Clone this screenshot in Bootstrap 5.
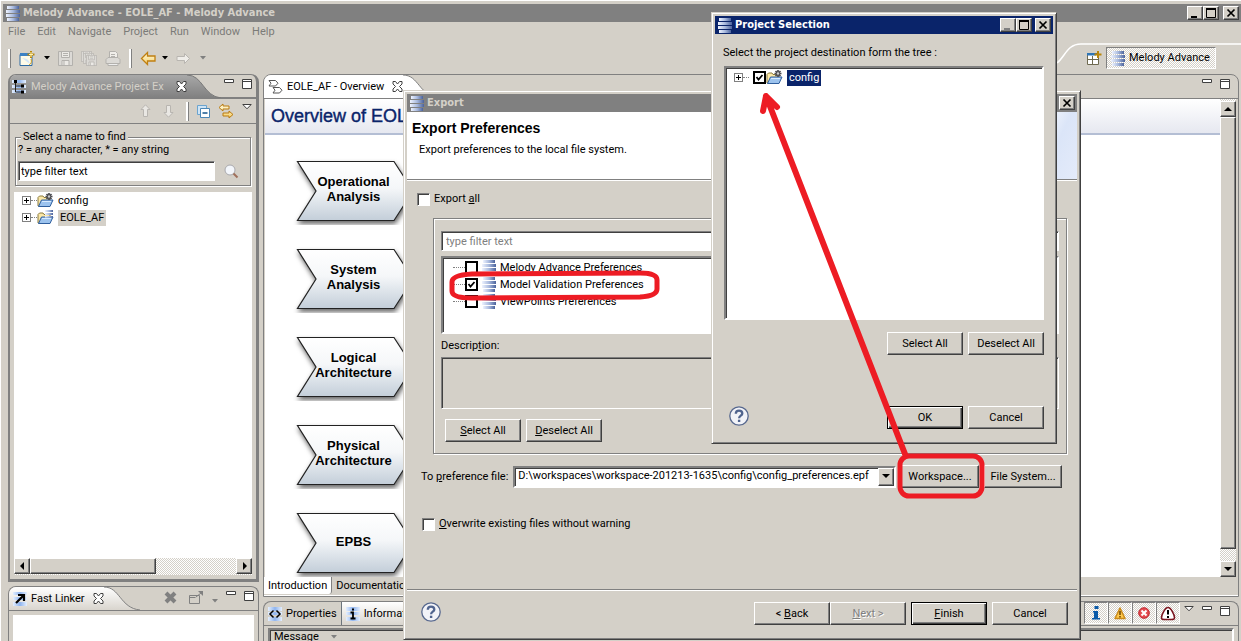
<!DOCTYPE html>
<html lang="en">
<head>
<meta charset="utf-8">
<meta name="viewport" content="width=device-width, initial-scale=1">
<title>Melody Advance - EOLE_AF - Melody Advance</title>
<link href="https://cdn.jsdelivr.net/npm/bootstrap@5.3.0/dist/css/bootstrap.min.css" rel="stylesheet">
<style>
:root{--face:#d4d0c8;--shade:#808080;--dark:#404040;--navy:#0a246a;--mark:#ed1c24}
body{background:var(--face);color:#000;font-family:Roboto,"Noto Sans",sans-serif;font-size:11px;line-height:14px;height:100vh;overflow:hidden;position:relative;white-space:nowrap}
svg{display:block;flex:none}
u{text-underline-offset:1px}
a{color:inherit;text-decoration:none}
.app{border-left:1px solid #fff;border-top:1px solid #fff;padding:3px 0 0 2px;height:100vh}
.title-strip{background:var(--shade);color:var(--face);height:18px;padding:0 2px 0 3px;font-weight:700;gap:3px}
.title-strip.hot{background:var(--navy);color:#fff}
.caption{font-family:"DejaVu Sans Condensed","DejaVu Sans",sans-serif;font-size:11px;line-height:18px}
.winbtn{width:16px;height:14px;padding:0;background:var(--face);border:1px solid;border-color:#fff var(--dark) var(--dark) #fff;box-shadow:inset -1px -1px var(--shade);display:flex;align-items:center;justify-content:center}
.menus{height:20px;padding-left:5px;gap:12px;color:#7b7b78}
.tools{height:32px;padding-left:5px}
.grip{width:3px;height:19px;background:#fff;border-right:1px solid var(--shade)}
.iconbtn{padding:0;border:0;background:none;display:block}
.persp{border:1px solid;border-color:var(--shade) #fff #fff var(--shade);height:22px;width:110px;padding:0 4px;gap:4px;margin:0 25px 0 4px}
.dither{background:repeating-conic-gradient(#fff 0 25%,var(--face) 0 50%) 0 0/2px 2px}
.desk{padding:0 2px 0 5px;gap:4px}
.side{width:251px}
.view{border:1px solid var(--shade);border-bottom:0;border-radius:8px 8px 0 0;overflow:hidden}
.explorer{border-width:1px 3px 3px 2px;border-bottom:3px solid var(--shade)}
.tabs{height:24px;border-bottom:1px solid var(--shade)}
.explorer .tabs{border-bottom:2px solid var(--shade)}
.tab-on{height:23px;gap:4px;padding-left:4px}
.tab-grey{background:linear-gradient(#a8a8a8,#808080);color:var(--face);padding-left:1px}
.tab-light{background:linear-gradient(#fff,#d9d5ce)}
.tab-white{background:#fff}
.viewtools{height:25px;border-bottom:1px solid var(--shade)}
.finder{border:1px solid var(--shade);box-shadow:inset 1px 1px #fff,1px 1px #fff;margin:6px 5px;height:56px;padding:0 2px}
.finder legend{font-size:11px;line-height:14px;width:auto;float:none;margin:0 0 0 3px;padding:0 2px;background:var(--face)}
.finder label{margin-top:-1px}
.field{background:#fff;border:1px solid;border-color:var(--shade) #fff #fff var(--shade);box-shadow:inset 1px 1px var(--dark);border-radius:0;font-size:11px;line-height:14px;padding:0 4px;height:20px;color:#000;min-height:0}
.finder .field{padding:0 2px;width:197px}
.field::placeholder{color:#808080}
.tree{background:#fff;list-style:none;margin:0;padding:0}
.tree li{height:17px;display:flex;align-items:center}
.well{background:#fff;border:2px solid;border-color:var(--shade) #fff #fff var(--shade);box-shadow:inset 1px 1px var(--dark)}
.picked{background:var(--face);padding:1px 2px}
.picked.hot{background:var(--navy);color:#fff}
.twist{width:9px;height:9px;border:1px solid var(--shade);background:linear-gradient(#000,#000) center/5px 1px no-repeat,linear-gradient(#000,#000) center/1px 5px no-repeat,#fff}
.dots{border-top:1px dotted var(--shade);width:6px}
.sbar{height:17px}
.sbtn,.thumb{background:var(--face);border:1px solid;border-color:#fff var(--dark) var(--dark) #fff;box-shadow:inset -1px -1px var(--shade);width:16px;height:16px;padding:0;display:flex;align-items:center;justify-content:center;flex:none}
.page{padding:0 2px 0 1px}
.page .sbtn:first-child{margin-top:2px}
.banner{height:36px;background:linear-gradient(#fff,#e6e8f0);border-bottom:2px solid #b4bed4;padding:1px 0 0 6px;font:18px "Liberation Sans",Arial,sans-serif;color:var(--navy);-webkit-text-stroke:.4px var(--navy)}
.steps{padding:22px 0 0 28px;gap:20px;overflow:hidden}
.step{width:124px;height:68px;position:relative;font:bold 13px/15px "Liberation Sans",Arial,sans-serif;color:#000;padding:0 3px 4px 0;flex:none;text-align:center}
.step svg{position:absolute;inset:0}
.step span{position:relative}
.pagetabs{height:19px;background:var(--face);border-bottom:1px solid #fff}
.pagetab{height:17px;padding:2px 4px 0;border-right:1px solid var(--shade);border-radius:0 0 3px 0}
.toggle{width:24px;height:22px;border:1px solid;border-color:var(--shade) #fff #fff var(--shade);padding:0;display:flex;align-items:center;justify-content:center}
.window{position:absolute;background:var(--face);border:1px solid;border-color:var(--face) var(--dark) var(--dark) var(--face);box-shadow:inset 1px 1px #fff,inset -1px -1px var(--shade);padding:3px}
.export{left:403px;top:90px;width:678px;height:550px}
.chooser{left:711px;top:12px;width:346px;height:432px}
.intro{background:linear-gradient(115deg,transparent 40%,#dbe5f8 70%,#e4ebfa) right/90px 100% no-repeat,#fff;height:68px;border-bottom:1px solid var(--shade);padding:8px 5px;box-shadow:0 1px #fff}
.intro h1{font:bold 14px/16px "Liberation Sans",Arial,sans-serif;margin:0 0 7px}
.intro div{padding-left:7px}
.panel{border:1px solid var(--shade);box-shadow:inset 1px 1px #fff,1px 1px #fff;margin:12px 10px 0 26px;padding:12px 7px 11px;height:236px}
.prefs{height:78px;margin-top:5px;padding:1px 0 0 10px}
.btn.push{width:76px;height:23px;padding:0;font-size:11px;line-height:14px;border-radius:0;color:#000;background:var(--face);border:1px solid;border-color:#fff var(--dark) var(--dark) #fff;box-shadow:inset -1px -1px var(--shade);flex:none}
.btn.push.wide{width:78px}
.btn.push.main{border-color:#000;box-shadow:inset 1px 1px #fff,inset -1px -1px var(--dark),inset -2px -2px var(--shade)}
.btn.push:disabled{color:#808080;text-shadow:1px 1px #fff;opacity:1}
.pair{gap:5px}
.tick{appearance:none;width:13px;height:13px;margin:0;background:#fff;border:1px solid;border-color:var(--shade) #fff #fff var(--shade);box-shadow:inset 1px 1px var(--dark);flex:none}
.tick.bold{border:2px solid #000;box-shadow:none}
.tick:checked{background:#fff url("data:image/svg+xml,%3Csvg xmlns='http://www.w3.org/2000/svg' viewBox='0 0 9 9'%3E%3Cpath d='M1.5 4 3.5 6.5 7.5 2' fill='none' stroke='%23000' stroke-width='1.8'/%3E%3C/svg%3E") center/9px 9px no-repeat}
.target{width:100%;height:22px;border:2px solid;border-color:var(--shade) #fff #fff var(--shade);box-shadow:inset 1px 1px var(--dark);border-radius:0;font-size:11px;line-height:14px;padding:0 16px 1px 3px;color:#000;appearance:none;background:#fff;display:block}
.drop{position:absolute;right:2px;top:2px;width:16px;height:18px;pointer-events:none}
.foot{border-top:1px solid var(--shade);box-shadow:inset 0 1px #fff;padding:12px 9px 0 14px}
.marks{position:absolute;left:0;top:0;pointer-events:none}
.desc{background:var(--face);height:52px;resize:none;display:block;width:100%}
</style>
</head>
<body>
<svg width="0" height="0" class="position-absolute" aria-hidden="true">
<defs>
<linearGradient id="bar"><stop offset="0" stop-color="#eef3ff"/><stop offset=".5" stop-color="#a9bade"/><stop offset="1" stop-color="#4b639c"/></linearGradient>
<linearGradient id="soft"><stop offset="0" stop-color="#e4efff"/><stop offset=".5" stop-color="#8fb4ee"/><stop offset="1" stop-color="#e4efff"/></linearGradient>
<linearGradient id="steel" x2="0" y2="1"><stop offset="0" stop-color="#fff"/><stop offset=".45" stop-color="#f5f7f9"/><stop offset="1" stop-color="#c3ced9"/></linearGradient>
<linearGradient id="gold" x2="0" y2="1"><stop offset="0" stop-color="#fffbe0"/><stop offset="1" stop-color="#f5cf6a"/></linearGradient>
<linearGradient id="greytab" x2="0" y2="1"><stop offset="0" stop-color="#a8a8a8"/><stop offset="1" stop-color="#808080"/></linearGradient>
<linearGradient id="lighttab" x2="0" y2="1"><stop offset="0" stop-color="#fff"/><stop offset="1" stop-color="#d9d5ce"/></linearGradient>
<filter id="drop" x="-10%" y="-10%" width="125%" height="135%"><feDropShadow dx="1" dy="3" stdDeviation="2.5" flood-opacity=".6"/></filter>
<symbol id="db" viewBox="0 0 14 15"><g fill="url(#bar)"><rect x="1" width="12" height="3"/><rect y="4" width="14" height="3"/><rect y="8" width="14" height="3"/><rect x="1" y="12" width="12" height="3"/></g></symbol>
<symbol id="close" viewBox="0 0 11 11"><path d="M1 .5h2.500l2 2.500 2-2.500H10v2.500L7.500 5.500 10 8v2.500H7.500l-2-2.500-2 2.500H1V8l2.500-2.500L1 3z" fill="#fff" stroke="#404040"/></symbol>
<symbol id="min" viewBox="0 0 10 4"><path d="M.5.5h9v3h-9z" fill="#fff" stroke="#404040"/></symbol>
<symbol id="max" viewBox="0 0 10 10"><path d="M.5.500h9v9h-9zM.5 2.500h9" fill="#fff" stroke="#404040"/></symbol>
<symbol id="menu" viewBox="0 0 10 6"><path d="M.8.500h8.400L5 4.800z" fill="#fff" stroke="#404040"/></symbol>
<symbol id="caret" viewBox="0 0 7 4"><path d="M1 0h6L4 3.500z" fill="currentColor"/></symbol>
<symbol id="wmin" viewBox="0 0 10 10"><path d="M1 8h6v2H1z" fill="currentColor"/></symbol>
<symbol id="wmax" viewBox="0 0 10 10"><path d="M.5 1.500h9v8h-9z" fill="none" stroke="#000"/><path d="M0 0h10v2H0z"/></symbol>
<symbol id="wx" viewBox="0 0 10 10"><path d="M1.500 1.500l7 7M8.500 1.500l-7 7" stroke="#000" stroke-width="1.700"/></symbol>
<symbol id="folder" viewBox="0 0 17 15"><path d="M1 13V4.500L2.500 3H6l1 1.500h6V13z" fill="#fbe8a8" stroke="#8c7a3c"/><path d="M1.500 13.500 4.500 7h11.500l-3 6.500z" fill="#9cc3ee" stroke="#2f5f9e"/><path d="M5 8.500h9" stroke="#d8ebff"/></symbol>
<symbol id="gear" viewBox="0 0 17 15"><use href="#folder" width="17" height="15"/><path d="M8.500 3.500h7M12 0v7M9.500 1l5 5M14.500 1l-5 5" stroke="#4b4b50" stroke-width="1.700"/><circle cx="12" cy="3.500" r="1.200" fill="#ccc"/></symbol>
<symbol id="model" viewBox="0 0 17 15"><use href="#folder" width="17" height="15"/><path d="M8 0h8v2H8zM8 3h8v2H8zM8 6h8v1.500H8z" fill="url(#bar)"/></symbol>
<symbol id="help" viewBox="0 0 20 20"><circle cx="10" cy="10" r="9.200" fill="#f2f3f8" stroke="#57688e" stroke-width="1.300"/><path d="M6.800 7.800C6.800 5.500 8.200 4.700 10 4.700s3.300.9 3.300 2.700c0 2.300-3.200 2.200-3.200 4.800" fill="none" stroke="#50648e" stroke-width="2.300"/><path d="M8.900 13.700h2.400V16H8.900z" fill="#50648e"/></symbol>
<symbol id="chev" viewBox="0 0 124 68"><path d="M4.500 4.500h96.500l19 29.500-19 29.500H4.500L23 34z" fill="url(#steel)" stroke="#222" stroke-width="1.200" filter="url(#drop)"/></symbol>
<symbol id="overview" viewBox="0 0 15 14"><path d="M1 .5h6.500L10 3.200 7.500 6H1l2-2.800zM5 7.500h6.500l2.500 2.700L11.500 13H5l2-2.800z" fill="#fff" stroke="#555"/></symbol>
<symbol id="diskette" viewBox="0 0 15 15"><path d="M.5.500h14v14H.5z" fill="#dcdad6" stroke="#b3b1ad"/><path d="M3.500.500h8v6h-8zM4 9.500h7v5H4z" fill="#eceae6" stroke="#b3b1ad"/><path d="M5 2.500h5M5 4.500h5M6 10v4" stroke="#b3b1ad"/></symbol>
</defs>
</svg>

<main class="app d-flex flex-column">
  <header class="title-strip d-flex align-items-center">
    <svg width="14" height="15"><use href="#db"/></svg>
    <span class="caption me-auto">Melody Advance - EOLE_AF - Melody Advance</span>
    <div class="d-flex"><button class="winbtn" aria-label="Minimize"><svg width="10" height="10"><use href="#wmin"/></svg></button><button class="winbtn" aria-label="Maximize"><svg width="10" height="10"><use href="#wmax"/></svg></button><button class="winbtn ms-1" aria-label="Close"><svg width="10" height="10"><use href="#wx"/></svg></button></div>
  </header>
  <nav class="menus d-flex align-items-center"><a href="#">File</a><a href="#">Edit</a><a href="#">Navigate</a><a href="#">Project</a><a href="#">Run</a><a href="#">Window</a><a href="#">Help</a></nav>

  <div class="tools d-flex align-items-center">
    <span class="grip me-1"></span>
    <button class="iconbtn ms-1" aria-label="New"><svg width="16" height="15"><path d="M1 3.500h12v11H1z" fill="#fffbe8" stroke="#2d6aa5"/><path d="M1 2h11v3H1z" fill="#3c81c4"/><path d="M3 7q7 0 8 6" fill="#d3e6f8"/><path d="M12 0v7M8.500 3.500h7" stroke="#b8860b" stroke-width="2"/><path d="M12 1v5M10 3.500h4" stroke="#fff3b0"/><path d="M12 8c1 3 0 5-2 6" stroke="#d5a021" fill="none"/></svg></button>
    <svg class="ms-2 me-1" width="7" height="4"><use href="#caret"/></svg>
    <button class="iconbtn ms-1" aria-label="Save"><svg width="15" height="15"><use href="#diskette"/></svg></button>
    <button class="iconbtn ms-2" aria-label="Save all"><svg width="16" height="15"><use href="#diskette" width="11" height="11"/><use href="#diskette" x="2" y="2" width="11" height="11"/><use href="#diskette" x="5" y="4" width="11" height="11"/></svg></button>
    <button class="iconbtn ms-2" aria-label="Print"><svg width="16" height="15"><path d="M4.500.500h6l2 2v5h-8z" fill="#f0eeea" stroke="#b3b1ad"/><path d="M1 8.500l2-2h10l2 2v4H1z" fill="#dcdad6" stroke="#b3b1ad"/><path d="M3 12.500h10v2H3zM6 3.500h4M6 5.500h4" stroke="#b3b1ad" fill="#eee"/></svg></button>
    <span class="grip ms-2 me-2"></span>
    <button class="iconbtn" aria-label="Back"><svg width="17" height="15"><path d="M1.500 7.500l6-6v3.500h7.500v5H7.500v3.500z" fill="url(#gold)" stroke="#c07f10" stroke-width="1.300"/></svg></button>
    <svg class="ms-1 me-2" width="7" height="4"><use href="#caret"/></svg>
    <button class="iconbtn" aria-label="Forward" disabled><svg width="15" height="13"><path d="M13.500 6.500l-5-5v3H1v4h7.500v3z" fill="#efede9" stroke="#b8b5b0"/></svg></button>
    <svg class="ms-2" width="7" height="4" color="#808080"><use href="#caret"/></svg>
    <div class="d-flex align-items-center ms-auto position-relative">
      <svg width="184" height="22" class="position-absolute end-0" style="top:-4px"><path d="M0 20C8 14 10 1 24 1H184" fill="none" stroke="#fff" stroke-width="1.500"/></svg>
      <button class="iconbtn position-relative" aria-label="Open perspective"><svg width="15" height="15"><path d="M.5 2.500h11v11H.5z" fill="#fff" stroke="#6f6a50"/><path d="M0 2h9v2.500H0z" fill="#2e75b6"/><path d="M0 8.500h11M5.500 5v9" stroke="#6f6a50"/><path d="M11 0v7M7.500 3.500h7" stroke="#b8860b" stroke-width="2"/></svg></button>
      <button class="persp dither d-flex align-items-center position-relative"><svg width="14" height="15"><use href="#db"/></svg>Melody Advance</button>
    </div>
  </div>

  <div class="desk d-flex flex-fill overflow-hidden">
    <div class="side d-flex flex-column flex-shrink-0">
      <section class="view explorer d-flex flex-column flex-fill mb-1">
        <div class="tabs d-flex">
          <div class="tab-on tab-grey d-flex align-items-center">
            <svg width="16" height="15"><path d="M1 1h14v3H1zM1 6h14v3H1zM1 11h14v3H1z" fill="url(#soft)"/><path d="M4.500 2v11h7M4.500 7h7" stroke="#222" fill="none"/><path d="M3 1h3v3H3zM10 5.500h3v3h-3zM10 11.500h3v3h-3z"/></svg>
            <span>Melody Advance Project Ex</span>
            <svg class="ms-2" width="11" height="11"><use href="#close"/></svg>
          </div>
          <svg width="34" height="23"><path d="M0 0C16 0 16 21 34 23H0z" fill="url(#greytab)"/><path d="M0 0C16 0 16 21 34 23" fill="none" stroke="#777"/></svg>
          <div class="d-flex align-items-start ms-auto gap-2 pt-1 pe-1"><svg width="10" height="4"><use href="#min"/></svg><svg width="10" height="10"><use href="#max"/></svg></div>
        </div>
        <div class="viewtools d-flex align-items-center justify-content-end gap-2 pe-1">
          <svg class="me-1" width="11" height="14"><path d="M5.500.800l4.500 4.700H7.500v7h-4v-7H1z" fill="#e9e7e3" stroke="#b8b5b0"/></svg>
          <svg class="me-1" width="11" height="14"><path d="M5.500 13.200L1 8.500h2.500v-7h4v7H10z" fill="#e9e7e3" stroke="#b8b5b0"/></svg>
          <span class="grip"></span>
          <svg width="13" height="13"><path d="M.5.500h9v9h-9z" fill="#cfe4f5" stroke="#6ba4cf"/><path d="M3.500 3.500h9v9h-9z" fill="#fff" stroke="#4b86b5"/><path d="M5.500 8h5" stroke="#15558b" stroke-width="1.500"/></svg>
          <svg width="16" height="16"><path d="M1 4.500L5 1v2h6v3H5v2zM15 11.500L11 15v-2H5v-3h6V8z" fill="url(#gold)" stroke="#b97b10"/></svg>
          <svg class="mb-2" width="10" height="6"><use href="#menu"/></svg>
        </div>
        <fieldset class="finder">
          <legend>Select a name to find</legend>
          <label for="find" class="d-block">? = any character, * = any string</label>
          <div class="d-flex align-items-center mt-1"><input id="find" class="field" value="type filter text"><svg class="ms-2" width="16" height="16"><circle cx="7" cy="7" r="5" fill="#f3f6fb" stroke="#a9a9ad"/><path d="M10.500 10.500l4 4" stroke="#a0705c" stroke-width="2"/></svg></div>
        </fieldset>
        <ul class="tree flex-fill mx-1 ps-2">
          <li><span class="twist"></span><span class="dots"></span><svg width="17" height="15"><use href="#gear"/></svg><span class="ps-1">config</span></li>
          <li><span class="twist"></span><span class="dots"></span><svg width="17" height="15" class="me-1"><use href="#model"/></svg><span class="picked">EOLE_AF</span></li>
        </ul>
        <div class="sbar dither d-flex mx-1 mb-1"><button class="sbtn" aria-label="Scroll left"><svg width="5" height="8"><path d="M4 0v8L0 4z"/></svg></button><span class="thumb" style="width:53%"></span><button class="sbtn ms-auto" aria-label="Scroll right"><svg width="5" height="8"><path d="M1 0v8l4-4z"/></svg></button></div>
      </section>
      <section class="view d-flex flex-column flex-shrink-0" style="height:55px">
        <div class="tabs d-flex">
          <div class="tab-on tab-light d-flex align-items-center">
            <svg width="14" height="14"><path d="M0 0h14v3H0zM0 5h14v3H0zM0 10h14v4H0z" fill="url(#soft)"/><path d="M3 11l7-7M5 3h6v6" stroke="#000" stroke-width="2.200" fill="none"/></svg>
            <span>Fast Linker</span><svg class="ms-1" width="11" height="11"><use href="#close"/></svg>
          </div>
          <svg width="36" height="23"><path d="M0 0C16 0 16 21 36 23H0z" fill="url(#lighttab)"/><path d="M0 0C16 0 16 21 36 23" fill="none" stroke="#808080"/></svg>
          <div class="d-flex align-items-start ms-auto gap-2 pt-1 pe-1">
            <svg class="me-1" width="13" height="13"><path d="M2 2l9 9M11 2l-9 9" stroke="#808080" stroke-width="4"/></svg>
            <svg width="14" height="13"><path d="M.500 4.500h10v8H.500zM.500 6.500h6M7 6l5-4" fill="none" stroke="#808080"/><path d="M9 0h5v5z" fill="#808080"/></svg>
            <svg class="mt-2" width="7" height="4" color="#808080"><use href="#caret"/></svg>
            <svg width="10" height="4"><use href="#min"/></svg><svg width="10" height="10"><use href="#max"/></svg>
          </div>
        </div>
        <div class="flex-fill bg-white mx-1 mt-1"></div>
      </section>
    </div>

    <div class="d-flex flex-column flex-fill">
      <section class="view d-flex flex-column flex-fill overflow-hidden mb-1" style="border-bottom:1px solid #808080">
        <div class="tabs d-flex">
          <div class="tab-on tab-white d-flex align-items-center"><svg width="15" height="14"><use href="#overview"/></svg><span>EOLE_AF - Overview</span><svg class="ms-1" width="11" height="11"><use href="#close"/></svg></div>
          <svg width="36" height="23"><path d="M0 0C16 0 16 21 36 23H0z" fill="#fff"/><path d="M0 0C16 0 16 21 36 23" fill="none" stroke="#808080"/></svg>
          <div class="d-flex align-items-start ms-auto gap-2 pt-1 pe-1"><svg width="10" height="4"><use href="#min"/></svg><svg class="me-1" width="10" height="10"><use href="#max"/></svg></div>
        </div>
        <div class="page d-flex flex-fill overflow-hidden">
          <div class="flex-fill bg-white d-flex flex-column overflow-hidden">
            <div class="banner d-flex align-items-center flex-shrink-0">Overview of EOLE_AF</div>
            <div class="steps d-flex flex-column flex-fill">
              <a href="#" class="step d-flex align-items-center justify-content-center"><svg width="124" height="68"><use href="#chev"/></svg><span>Operational<br>Analysis</span></a>
              <a href="#" class="step d-flex align-items-center justify-content-center"><svg width="124" height="68"><use href="#chev"/></svg><span>System<br>Analysis</span></a>
              <a href="#" class="step d-flex align-items-center justify-content-center"><svg width="124" height="68"><use href="#chev"/></svg><span>Logical<br>Architecture</span></a>
              <a href="#" class="step d-flex align-items-center justify-content-center"><svg width="124" height="68"><use href="#chev"/></svg><span>Physical<br>Architecture</span></a>
              <a href="#" class="step d-flex align-items-center justify-content-center"><svg width="124" height="68"><use href="#chev"/></svg><span>EPBS</span></a>
            </div>
          </div>
          <div class="dither d-flex flex-column"><button class="sbtn" aria-label="Scroll up"><svg width="8" height="5"><path d="M0 4h8L4 0z"/></svg></button><span class="thumb flex-fill" style="margin-bottom:12px"></span><button class="sbtn" aria-label="Scroll down"><svg width="8" height="5"><path d="M0 0h8L4 4z"/></svg></button></div>
        </div>
        <div class="pagetabs d-flex"><a href="#" class="pagetab bg-white">Introduction</a><a href="#" class="pagetab">Documentation</a></div>
      </section>
      <section class="view d-flex flex-column flex-shrink-0" style="height:40px">
        <div class="tabs d-flex">
          <div class="tab-on d-flex align-items-center pe-1 border-end border-secondary"><svg width="14" height="14"><path d="M0 0h14v4H0zM0 5h14v3H0zM0 10h14v4H0z" fill="url(#soft)"/><path d="M5.500 3.500L2 7l3.500 3.500M8.500 3.500L12 7l-3.500 3.500" fill="none" stroke="#000" stroke-width="1.500"/></svg><a href="#">Properties</a></div>
          <div class="tab-on tab-light d-flex align-items-center pe-3"><svg width="14" height="14"><path d="M0 0h14v4H0zM0 5h14v3H0zM0 10h14v4H0z" fill="url(#soft)"/><path d="M4.500 5.500H7V11M4.500 11.500h5M6 2.500h2" stroke="#000" stroke-width="1.800" fill="none"/></svg><a href="#">Information</a></div>
          <div class="d-flex align-items-start ms-auto">
            <button class="toggle dither" aria-label="Information"><svg width="10" height="14"><path d="M3.500 0h4v3h-4zM2 5h5v7h2v1.500H1V12h2V6.500H2z" fill="#0b5aa8"/></svg></button>
            <button class="toggle dither" aria-label="Warnings"><svg width="12" height="13"><path d="M6 1l5 10.500H1z" fill="#ffc84a" stroke="#c98a1b" stroke-width="1.500" stroke-linejoin="round"/><path d="M6 4v4M6 9v1.500" stroke="#6a4300" stroke-width="1.500"/></svg></button>
            <button class="toggle dither" aria-label="Errors"><svg width="12" height="12"><circle cx="6" cy="6" r="5.300" fill="#e34b50" stroke="#c1252c"/><path d="M3.500 3.500l5 5M8.500 3.500l-5 5" stroke="#fff" stroke-width="2"/></svg></button>
            <button class="toggle dither" aria-label="Blocking"><svg width="16" height="15"><path d="M8 1.500C11 1.500 14.500 9 14.500 11.500S13 13.500 8 13.500 1.500 14 1.500 11.500 5 1.500 8 1.500z" fill="#fff" stroke="#7c1620" stroke-width="1.600"/><path d="M8 4v4.500M8 10v2" stroke="#000" stroke-width="2"/></svg></button>
            <div class="d-flex gap-2 pt-1 ps-1 pe-1"><svg width="10" height="6"><use href="#menu"/></svg><svg width="10" height="4"><use href="#min"/></svg><svg class="me-1" width="10" height="10"><use href="#max"/></svg></div>
          </div>
        </div>
        <div class="well flex-fill mx-1 px-1 border-bottom-0" style="background:#d4d0c8;margin-top:2px">Message <svg class="d-inline ms-2" width="7" height="4" color="#808080"><use href="#caret"/></svg></div>
      </section>
    </div>
  </div>
</main>

<section class="window export" role="dialog" aria-label="Export">
  <div class="title-strip d-flex align-items-center"><svg width="14" height="15"><use href="#db"/></svg><span class="caption me-auto">Export</span><button class="winbtn" aria-label="Close"><svg width="10" height="10"><use href="#wx"/></svg></button></div>
  <div class="intro"><h1>Export Preferences</h1><div>Export preferences to the local file system.</div></div>
  <div class="d-flex align-items-center gap-1" style="padding:12px 10px 0"><input type="checkbox" class="tick" id="all"><label for="all">Export <u>a</u>ll</label></div>
  <div class="panel">
    <input class="field d-block w-100" placeholder="type filter text" aria-label="Filter">
    <ul class="tree well prefs">
      <li><span class="dots" style="width:12px"></span><input type="checkbox" class="tick bold" id="p1"><svg class="ms-1" width="14" height="15"><use href="#db"/></svg><label for="p1" class="ps-1">Melody Advance Preferences</label></li>
      <li><span class="dots" style="width:12px"></span><input type="checkbox" class="tick bold" id="p2" checked><svg class="ms-1" width="14" height="15"><use href="#db"/></svg><label for="p2" class="ps-1">Model Validation Preferences</label></li>
      <li><span class="dots" style="width:12px"></span><input type="checkbox" class="tick bold" id="p3"><svg class="ms-1" width="14" height="15"><use href="#db"/></svg><label for="p3" class="ps-1">ViewPoints Preferences</label></li>
    </ul>
    <label for="desc" class="d-block pb-1" style="margin-top:5px">Descrip<u>t</u>ion:</label>
    <textarea id="desc" class="field desc" readonly></textarea>
    <div class="pair d-flex ms-1" style="margin-top:10px"><button class="btn push"><u>S</u>elect All</button><button class="btn push"><u>D</u>eselect All</button></div>
  </div>
  <div class="pair d-flex align-items-center" style="padding:11px 15px 0 14px"><label for="file">To <u>p</u>reference file:</label>
    <div class="position-relative flex-fill"><select id="file" class="target"><option>D:\workspaces\workspace-201213-1635\config\config_preferences.epf</option></select><span class="drop sbtn"><svg width="8" height="5"><path d="M0 0h8L4 4z"/></svg></span></div>
    <button class="btn push wide">Workspace...</button><button class="btn push wide">File System...</button></div>
  <div class="d-flex align-items-center gap-1" style="padding:29px 15px 58px"><input type="checkbox" class="tick" id="over"><label for="over"><u>O</u>verwrite existing files without warning</label></div>
  <div class="foot pair d-flex align-items-start"><svg class="me-auto" width="20" height="20"><use href="#help"/></svg><div class="d-flex"><button class="btn push">&lt; <u>B</u>ack</button><button class="btn push" disabled><u>N</u>ext &gt;</button></div><button class="btn push main"><u>F</u>inish</button><button class="btn push">Cancel</button></div>
</section>

<section class="window chooser d-flex flex-column" role="dialog" aria-label="Project Selection">
  <div class="title-strip hot d-flex align-items-center"><svg width="14" height="15"><use href="#db"/></svg><span class="caption me-auto">Project Selection</span><div class="d-flex"><button class="winbtn" style="color:#808080" aria-label="Minimize"><svg width="10" height="10"><use href="#wmin"/></svg></button><button class="winbtn" aria-label="Maximize"><svg width="10" height="10"><use href="#wmax"/></svg></button></div><button class="winbtn" aria-label="Close"><svg width="10" height="10"><use href="#wx"/></svg></button></div>
  <div class="px-2" style="padding-top:12px;padding-bottom:6px">Select the project destination form the tree :</div>
  <ul class="tree well flex-fill ps-2" style="margin:0 9px;padding-top:1px"><li><span class="twist"></span><span class="dots"></span><input type="checkbox" class="tick bold ms-1" checked aria-label="config"><svg width="17" height="15"><use href="#gear"/></svg><span class="picked hot ms-1">config</span></li></ul>
  <div class="pair d-flex justify-content-end" style="padding:12px 9px 0"><button class="btn push">Select All</button><button class="btn push">Deselect All</button></div>
  <div class="pair d-flex" style="padding:51px 9px 11px 14px"><svg class="me-auto" width="20" height="20"><use href="#help"/></svg><button class="btn push main">OK</button><button class="btn push">Cancel</button></div>
</section>

<svg class="marks" width="1000" height="510" aria-hidden="true"><g fill="none" stroke="#ed1c24" stroke-linecap="round" stroke-linejoin="round">
  <path d="M472 274L640 273Q657 273 657 280V289Q657 296 640 297L472 298Q452 298 452 291V282Q452 275 472 274Z" stroke-width="5"/>
  <rect x="900" y="456" width="82" height="40" rx="9" stroke-width="5"/>
  <path d="M905 454L766 96M763 111L766 96L777 107" stroke-width="6"/></g></svg>
<script src="https://cdn.jsdelivr.net/npm/bootstrap@5.3.0/dist/js/bootstrap.bundle.min.js"></script>
</body>
</html>
